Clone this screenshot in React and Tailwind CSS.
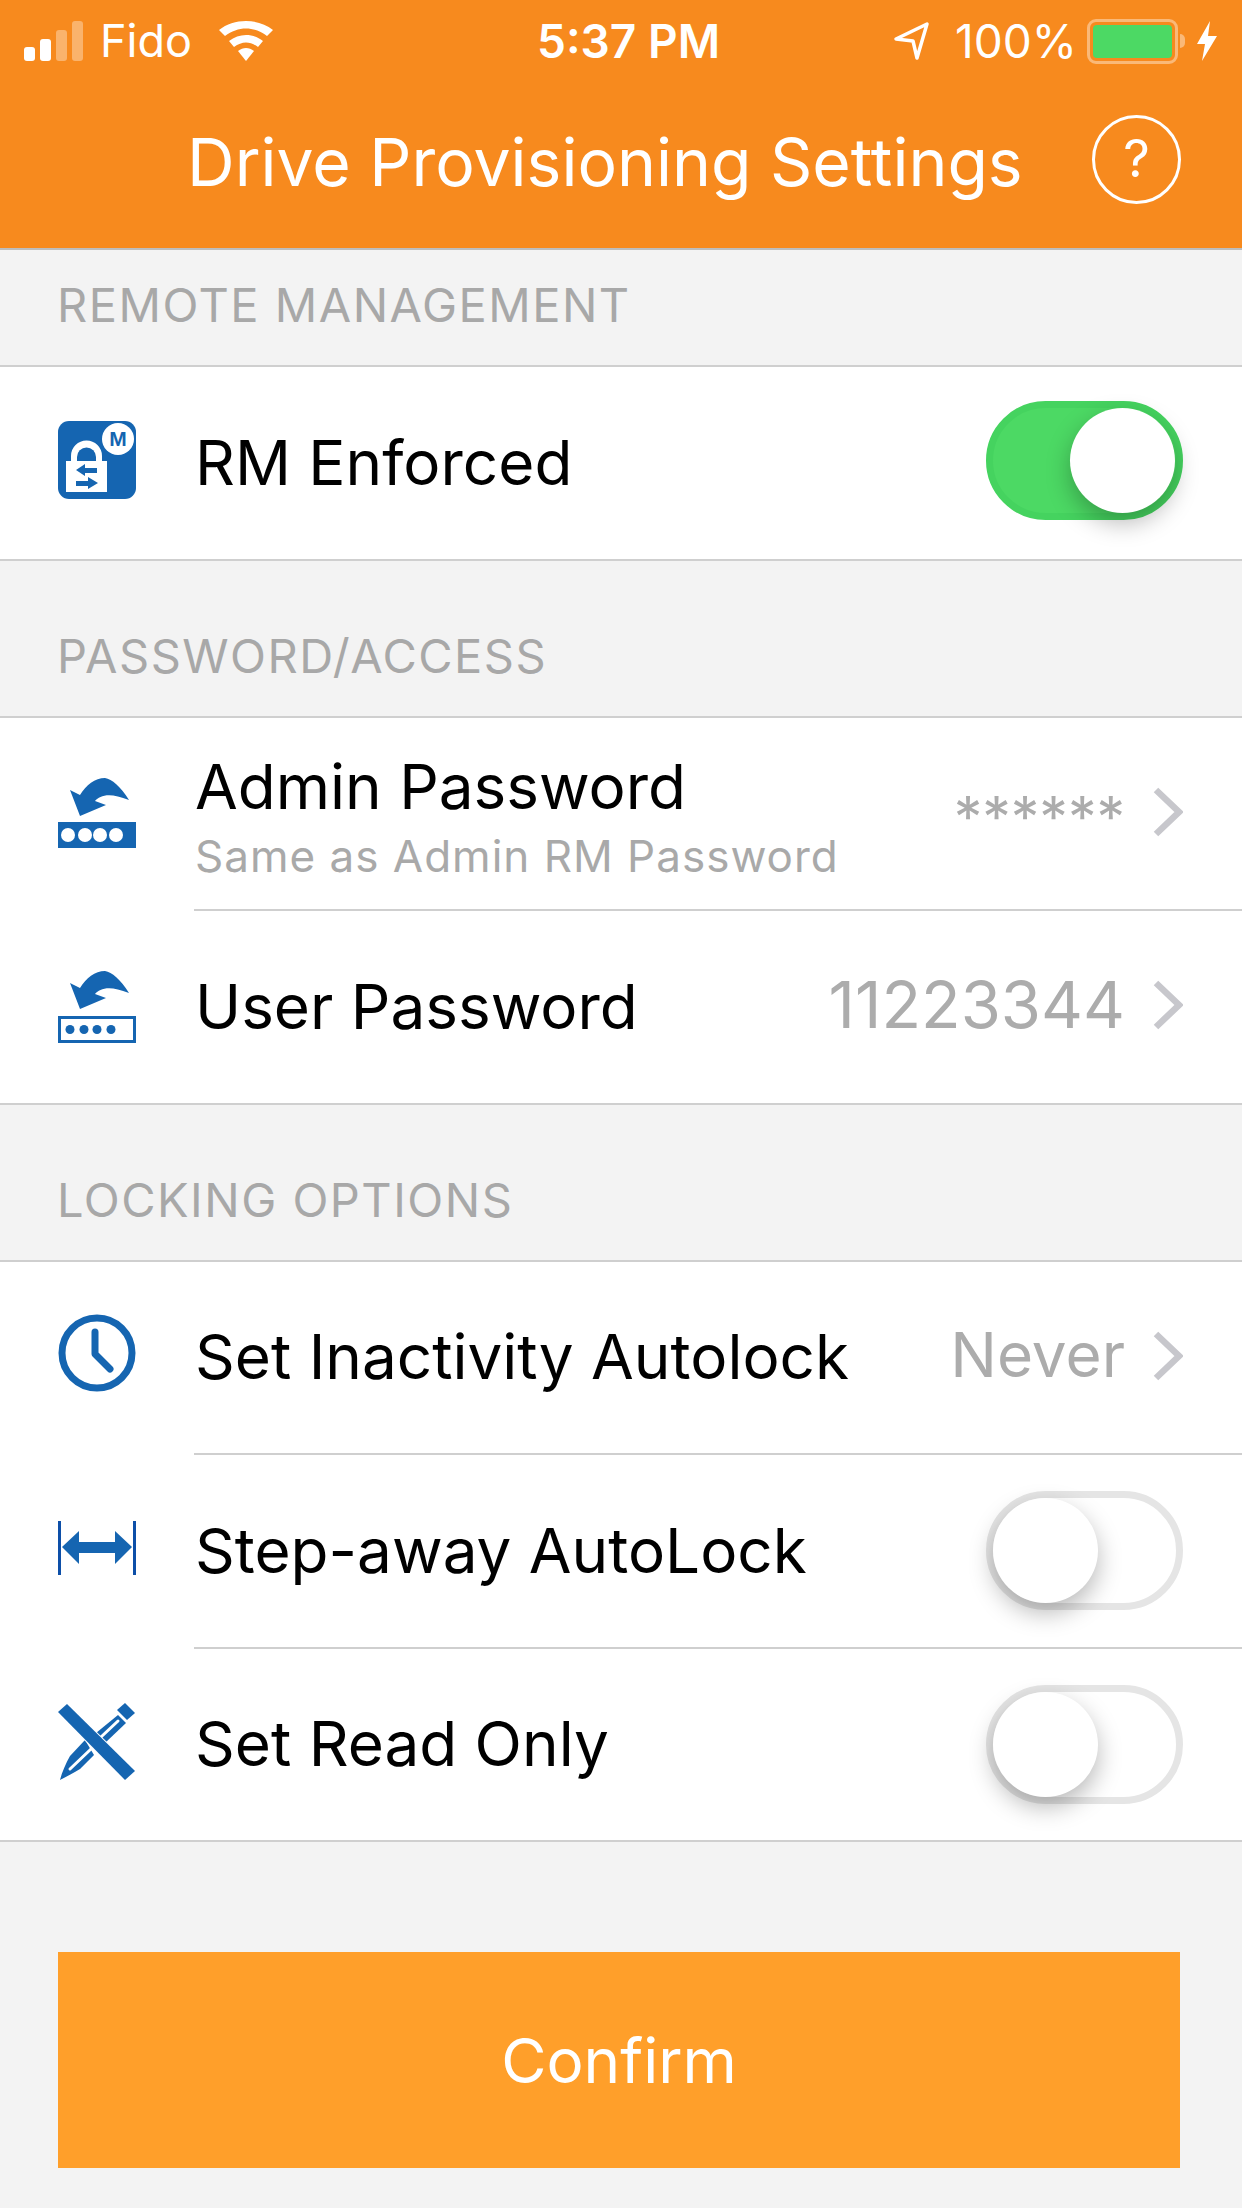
import React from 'react';

const BLUE = '#1565b1';

const ArrowBack = () => (
    <path d="M12 12 L22 38 L48 27 L37 23 C42 17 52 14 71 22 C62 8 54 1 47 0 C37 0 28 7 22 17 Z" fill={BLUE} />
);

const RmIcon = () => (
    <svg width="78" height="78" viewBox="0 0 78 78" className="mb-[6px]">
        <rect x="0" y="0" width="78" height="78" rx="11" fill={BLUE} />
        <circle cx="60" cy="18" r="16" fill="#fff" />
        <text x="60" y="25" textAnchor="middle" fontSize="21" fontWeight="700" fontFamily="Liberation Sans, sans-serif" fill={BLUE}>M</text>
        <path d="M8 40 H49 V71 H8 Z" fill="#fff" />
        <path d="M13 41 V35 A15.5 15.5 0 0 1 44 35 V41 Z" fill="#fff" />
        <path d="M19 40 V36 A9.5 9.5 0 0 1 38 36 V40 Z" fill={BLUE} />
        <path d="M18 49 L27 43 V47 H39 V52 H27 V55 Z" fill={BLUE} />
        <path d="M40 62 L30 56 V60 H18 V65 H30 V68 Z" fill={BLUE} />
    </svg>
);

const AdminIcon = () => (
    <svg width="78" height="70" viewBox="0 0 78 70">
        <ArrowBack />
        <rect x="0" y="44" width="78" height="26" fill={BLUE} />
        {[10, 27, 42, 58].map(cx => <circle key={cx} cx={cx} cy="57" r="7" fill="#fff" />)}
    </svg>
);

const UserIcon = () => (
    <svg width="78" height="72" viewBox="0 0 78 72">
        <ArrowBack />
        <rect x="1.5" y="46.5" width="75" height="24" fill="none" stroke={BLUE} strokeWidth="3" />
        {[12, 26, 39, 53].map(cx => <circle key={cx} cx={cx} cy="58.5" r="4.5" fill={BLUE} />)}
    </svg>
);

const ClockIcon = () => (
    <svg width="78" height="78" viewBox="0 0 78 78" className="mb-[8px]">
        <circle cx="39" cy="39" r="35" fill="none" stroke={BLUE} strokeWidth="7" />
        <path d="M37 18 V40 L52 55" fill="none" stroke={BLUE} strokeWidth="7" strokeLinecap="round" strokeLinejoin="round" />
    </svg>
);

const StepIcon = () => (
    <svg width="78" height="54" viewBox="0 0 78 54" className="mb-[6px]">
        <rect x="0" y="0" width="3" height="54" fill="#0d4fa8" />
        <rect x="75" y="0" width="3" height="54" fill="#0d4fa8" />
        <path d="M4 26 L21 10 V21 H57 V10 L74 26 L57 43 V32 H21 V43 Z" fill={BLUE} />
    </svg>
);

const ReadOnlyIcon = () => (
    <svg width="78" height="78" viewBox="0 0 78 78" className="mb-[6px]">
        <path d="M38 31 L60 13 L68 21 L47 41 Z" fill={BLUE} />
        <path d="M27 38 L12 54 C8 61 4 70 2 78 C9 74 16 71 22 67 L36 53 Z" fill={BLUE} />
        <path d="M43 35 L60 19 M12 67 L33 47" stroke="#fff" strokeWidth="3" strokeLinecap="round" />
        <path d="M59 8 L67 1 L77 11 L69 18 Z" fill={BLUE} />
        <path d="M0 10 L9 2 L77 69 L67 78 Z" fill={BLUE} stroke="#fff" strokeWidth="2" paintOrder="stroke" />
    </svg>
);

const Toggle = ({ on }) => (
    <div className={`flex h-[119px] w-[197px] shrink-0 items-center rounded-full border-[7px] ${on ? 'mb-[4px] justify-end border-[#45d35f] bg-[#4cd964] pr-px' : 'justify-start border-[#e5e5e5] bg-white'}`}>
        <div className="h-[105px] w-[105px] rounded-full bg-white shadow-[0_10px_24px_rgba(0,0,0,0.28)]" />
    </div>
);

const Chevron = () => (
    <svg width="32" height="50" viewBox="0 0 32 50" className="mb-[3px] shrink-0">
        <path d="M5 3 L28 25 L5 47" fill="none" stroke="#c7c7cc" strokeWidth="6.5" />
    </svg>
);

const SectionLabel = ({ children, className }) => (
    <div className={`flex items-end px-[57px] pb-[38px] text-[47px] leading-[44px] tracking-[1.5px] text-[#a8a8a8] ${className}`}>
        {children}
    </div>
);

const Row = ({ icon, title, subtitle, value, valueClass, toggle }) => (
    <div className="flex h-[191.5px] items-center pl-[58px] pr-[59px]">
        <div className="flex w-[137px] shrink-0">{icon}</div>
        <div className={`flex-1 ${subtitle ? 'pt-[7px]' : ''}`}>
            <div className="text-[62px] leading-[64px] text-black">{title}</div>
            {subtitle && <div className="mt-[15px] text-[44px] leading-[44px] tracking-[1px] text-[#a9a9a9]">{subtitle}</div>}
        </div>
        {value && <div className={`mr-[26px] leading-[64px] text-[#acacac] ${valueClass}`}>{value}</div>}
        {value && <Chevron />}
        {toggle !== undefined && <Toggle on={toggle} />}
    </div>
);

const Divider = () => <div className="ml-[194px] h-[2px] bg-[#cfcfcf]" />;
const Line = () => <div className="h-[2px] bg-[#cfcfcf]" />;

const StatusBar = () => (
    <div className="flex h-[78px] items-center pl-[24px] pr-[19px] text-white">
        <div className="flex h-[40px] items-end gap-[5px]">
            <div className="h-[14px] w-[11px] rounded-[3px] bg-white" />
            <div className="h-[22px] w-[11px] rounded-[3px] bg-white" />
            <div className="h-[31px] w-[11px] rounded-[3px] bg-white/35" />
            <div className="h-[40px] w-[11px] rounded-[3px] bg-white/35" />
        </div>
        <span className="ml-[17px] text-[45px] leading-[44px]">Fido</span>
        <svg width="54" height="40" viewBox="0 0 54 40" className="ml-[27px]">
            <path d="M27 40 L19 30 C24 26 30 26 35 30 Z" fill="#fff" />
            <path d="M15 26 L10 20 C20 12 34 12 44 20 L39 26 C31 20 23 20 15 26 Z" fill="#fff" />
            <path d="M6 15 L0 9 C15 -3 39 -3 54 9 L48 15 C35 5 19 5 6 15 Z" fill="#fff" />
        </svg>
        <span className="ml-[264px] text-[46px] font-semibold leading-[44px]">5:37 PM</span>
        <svg width="36" height="40" viewBox="0 0 36 40" className="ml-[174px]">
            <path d="M2 18 L33 3 L23 37 L19 20 Z" fill="none" stroke="#fff" strokeWidth="3.5" strokeLinejoin="round" />
        </svg>
        <span className="ml-[25px] text-[46px] leading-[44px]">100%</span>
        <div className="ml-[10px] flex h-[45px] w-[91px] rounded-[9px] border-[3px] border-white/40 p-[3px]">
            <div className="flex-1 rounded-[4px] bg-[#4cd964]" />
        </div>
        <div className="ml-[2px] h-[14px] w-[5px] rounded-r-full bg-white/40" />
        <svg width="20" height="40" viewBox="0 0 20 40" className="ml-[12px]">
            <path d="M13 0 L0 23 H8 L5 40 L20 15 H11 Z" fill="#fff" />
        </svg>
    </div>
);

export default function App() {
    return (
        <div className="flex h-[2208px] w-[1242px] flex-col overflow-hidden bg-[#f3f3f3] font-['Inter',sans-serif]">
            <div className="h-[250px] border-b-2 border-[#bdbdbd] bg-[#f78a1e] pt-[2px]">
                <StatusBar />
                <div className="flex h-[158px] items-center pl-[187px] pr-[61px]">
                    <span className="mt-[5px] flex-1 text-[66px] leading-[80px] text-white">Drive Provisioning Settings</span>
                    <div className="flex h-[89px] w-[89px] items-center justify-center rounded-full border-[3px] border-white text-[52px] text-white">?</div>
                </div>
            </div>

            <SectionLabel className="h-[115px]">REMOTE MANAGEMENT</SectionLabel>
            <Line />
            <div className="bg-white">
                <Row icon={<RmIcon />} title="RM Enforced" toggle={true} />
            </div>
            <Line />

            <SectionLabel className="h-[155px]">PASSWORD/ACCESS</SectionLabel>
            <Line />
            <div className="bg-white">
                <Row icon={<AdminIcon />} title="Admin Password" subtitle="Same as Admin RM Password" value="******" valueClass="mt-[10px] text-[57px]" />
                <Divider />
                <Row icon={<UserIcon />} title="User Password" value="11223344" valueClass="mb-[4px] text-[65px]" />
            </div>
            <Line />

            <SectionLabel className="h-[155px]">LOCKING OPTIONS</SectionLabel>
            <Line />
            <div className="bg-white">
                <Row icon={<ClockIcon />} title="Set Inactivity Autolock" value="Never" valueClass="mb-[4px] text-[62px]" />
                <Divider />
                <Row icon={<StepIcon />} title="Step-away AutoLock" toggle={false} />
                <Divider />
                <Row icon={<ReadOnlyIcon />} title="Set Read Only" toggle={false} />
            </div>
            <Line />

            <div className="flex flex-1 items-start pl-[58px] pr-[62px] pt-[110px]">
                <button className="h-[216px] w-full bg-[#ff9f2a] text-[62px] text-white">Confirm</button>
            </div>
        </div>
    );
}
